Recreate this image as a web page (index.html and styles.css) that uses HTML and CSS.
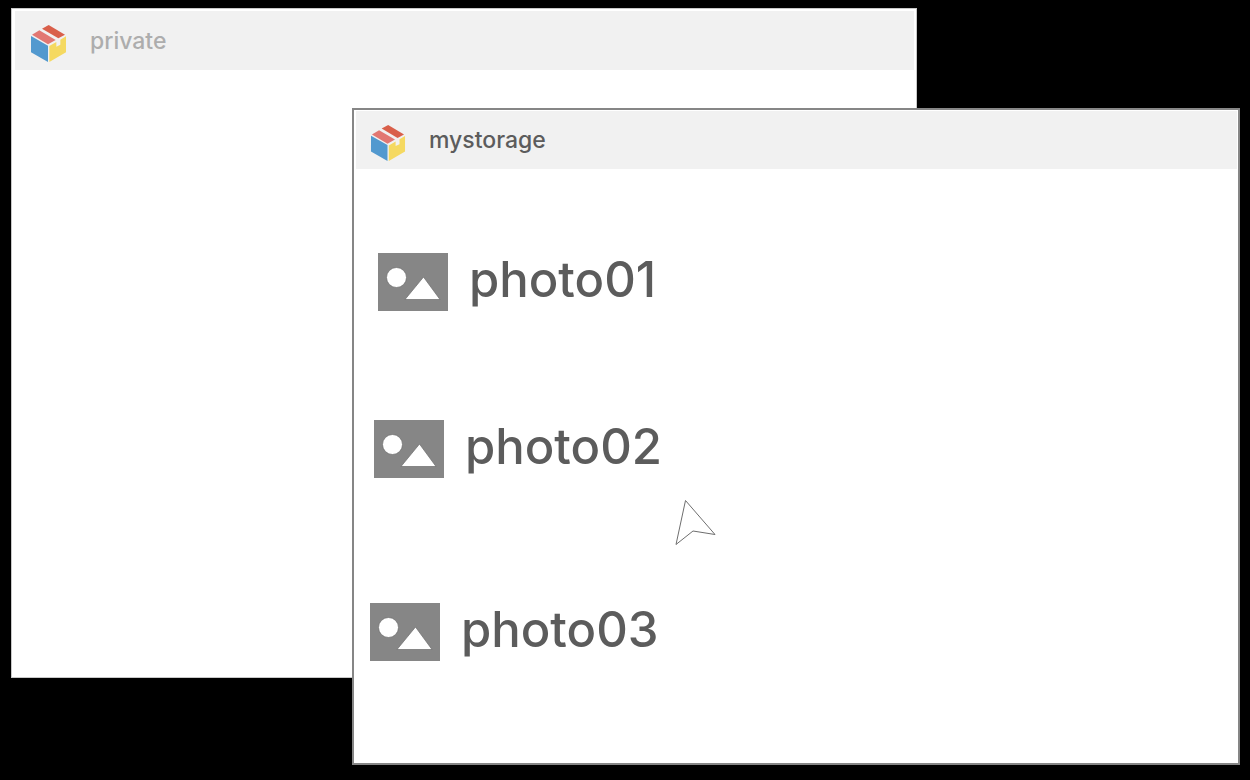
FILE: index.html
```html
<!DOCTYPE html>
<html lang="en">
<head>
  <meta charset="UTF-8" />
  <meta name="viewport" content="width=device-width, initial-scale=1" />
  <title>mystorage</title>
  <link rel="stylesheet" href="styles.css">
</head>
<body>

<!-- shared shapes -->
<svg class="defs" width="0" height="0" aria-hidden="true">
  <symbol id="box" viewBox="90 72 111 117">
    <path fill="#5299cf" d="M93 108L144 137V186L93 157Z"/>
    <path fill="#f5d961" d="M148 138L169 126V140L181 134V119L198 109V157L148 186Z"/>
    <path fill="#e27772" d="M96 104L118 91L167 120L144 133Z"/>
    <path fill="#d95f4a" d="M126 86L146 75L195 104L175 115Z"/>
  </symbol>
  <symbol id="photo" viewBox="0 0 70 58">
    <rect width="70" height="58" fill="#868686"/>
    <circle cx="18.5" cy="24.5" r="10" fill="#fff" stroke="#6c6c6c" stroke-width=".7"/>
    <path d="M45.5 24L62 46.5H27Z" fill="#fff" stroke="#6c6c6c" stroke-width=".7"/>
  </symbol>
</svg>

<main class="desktop">
  <section class="window window-back">
    <header class="title-bar">
      <svg class="logo" aria-hidden="true"><use href="#box"/></svg>
      <h2>private</h2>
    </header>
  </section>

  <section class="window window-front">
    <header class="title-bar">
      <svg class="logo" aria-hidden="true"><use href="#box"/></svg>
      <h2>mystorage</h2>
    </header>
    <ul class="files">
      <li><svg class="thumb" aria-hidden="true"><use href="#photo"/></svg><span>photo01</span></li>
      <li><svg class="thumb" aria-hidden="true"><use href="#photo"/></svg><span>photo02</span></li>
      <li><svg class="thumb" aria-hidden="true"><use href="#photo"/></svg><span>photo03</span></li>
    </ul>
  </section>

  <svg class="cursor" viewBox="0 0 42 48" aria-hidden="true">
    <path d="M11.5 2.5L41 36.5L19 33L2 46.5Z" fill="#fff" stroke="#6e6e6e"/>
  </svg>
</main>

</body>
</html>
```

FILE: styles.css
```css
body {
  margin: 0;
  background: #000;
  font-family: Inter, 'Liberation Sans', sans-serif;
  color: #5c5c5c;
}

.defs {
  position: absolute;
}

.desktop {
  position: relative;
  min-height: 100vh;
  overflow: hidden;
}

/* windows */
.window {
  position: absolute;
  box-sizing: border-box;
  background: #fff;
}

.window-back {
  top: 8px;
  left: 11px;
  right: 333px;
  bottom: 102px;
  border: 1px solid #c8c8c8;
  padding: 2px 2px 0 3px;
}

.window-front {
  top: 108px;
  left: 352px;
  right: 10px;
  bottom: 15px;
  border: 2px solid #868686;
  padding: 1px 1px 0 2px;
}

.title-bar {
  display: flex;
  align-items: center;
  height: 59px;
  padding-left: 15px;
  background: #f1f1f1;
}

.window-front .title-bar {
  height: 58px;
  padding-left: 14px;
}

.title-bar h2 {
  margin: 0 0 0 23px;
  font-size: 23px;
  line-height: 28px;
  font-weight: 500;
}

.window-back h2 {
  color: #adadad;
}

.logo {
  width: 37px;
  height: 39px;
  margin-top: 6px;
}

.window-front .logo {
  width: 36px;
  height: 38px;
}

/* file list */
.files {
  list-style: none;
  margin: 0;
  padding: 84px 0 0;
}

.files li {
  display: flex;
  align-items: center;
  gap: 21px;
  height: 58px;
  padding-left: 22px;
  font-size: 49px;
  line-height: 58px;
  font-weight: 500;
}

.files li + li {
  margin-top: 109px;
  padding-left: 18px;
}

.files li + li + li {
  margin-top: 125px;
  padding-left: 14px;
}

.files span {
  padding-bottom: 4px;
}

.thumb {
  width: 70px;
  height: 58px;
}

.cursor {
  position: absolute;
  top: 498px;
  left: 674px;
  width: 42px;
  height: 48px;
}
```
